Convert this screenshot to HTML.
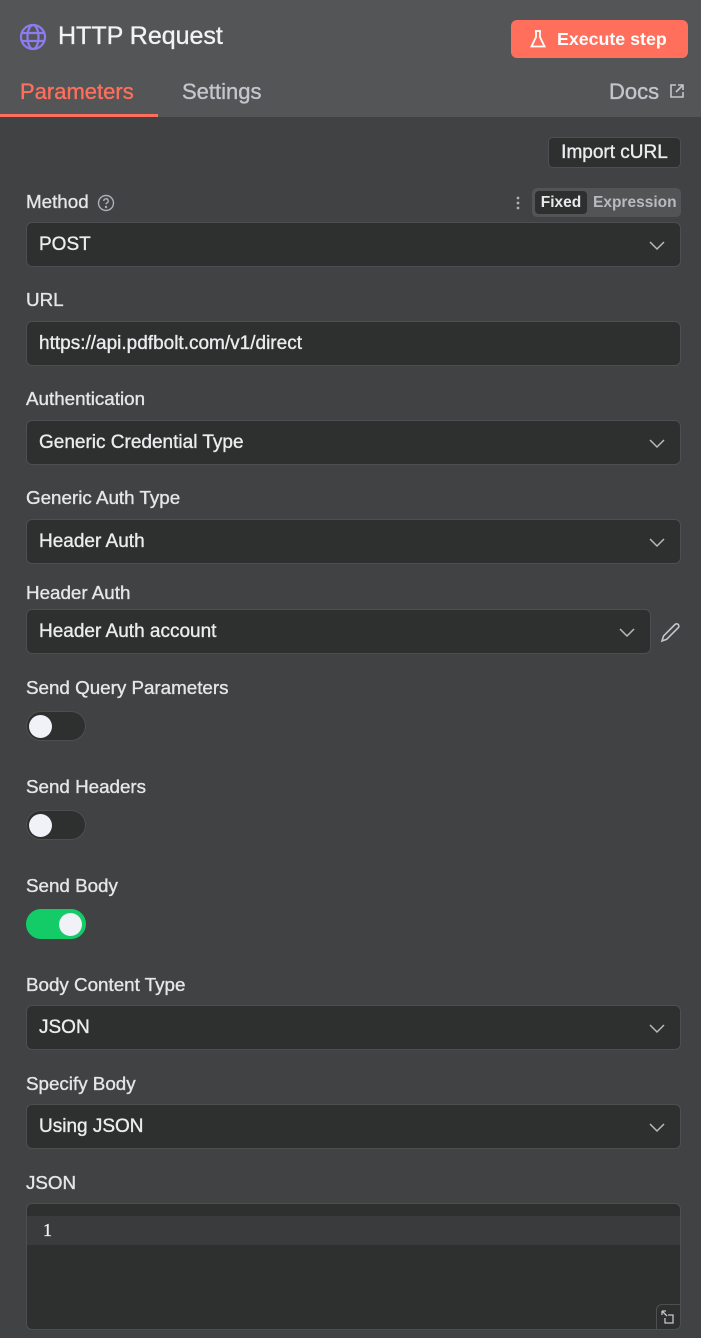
<!DOCTYPE html>
<html><head><meta charset="utf-8"><style>
*{box-sizing:border-box;margin:0;padding:0}
body{width:701px;height:1338px;background:#414244;font-family:"Liberation Sans",sans-serif;color:#e9e9ec;position:relative;overflow:hidden;-webkit-text-stroke:0.35px currentColor}
.hdr{position:absolute;left:0;top:0;width:701px;height:117px;background:#545557}
.abs{position:absolute}
.lbl{position:absolute;left:26px;font-size:18.8px;color:#e6e6e8;line-height:20px}
.inp{position:absolute;left:26px;width:655px;height:45px;background:#2e2f2f;border:1px solid #4e4f51;border-radius:6px;font-size:19px;color:#ececee;padding-left:12px;line-height:43px}
.chev{position:absolute;right:14px;top:16px}
.tog{position:absolute;left:26px;width:60px;height:30px;border-radius:15px;background:#2e2f2f;border:1px solid #4e4f51}
.tog i{position:absolute;top:3px;left:2px;width:23px;height:23px;border-radius:50%;background:#f1f2f8}
.tog.on{background:#13cc68;border-color:#13cc68}
.tog.on i{left:32px}
svg{-webkit-text-stroke:0}
</style></head><body>
<div class="hdr"></div>
<svg class="abs" style="left:19px;top:23px" width="28" height="28" viewBox="0 0 28 28" fill="none" stroke="#8a7df0" stroke-width="2.2"><circle cx="14" cy="14" r="12"/><ellipse cx="14" cy="14" rx="5.5" ry="12"/><path d="M2.5 10h23M2.5 18h23"/></svg>
<div class="abs" style="left:58px;top:21px;font-size:25px;color:#f3f3f5;line-height:30px">HTTP Request</div>
<div class="abs" style="left:511px;top:20px;width:177px;height:38px;background:#ff6f5c;border-radius:6px;color:#fff;font-size:17.8px;font-weight:bold;line-height:38px;padding-left:46px;-webkit-text-stroke:0">Execute step</div>
<svg class="abs" style="left:529px;top:29px" width="18" height="20" viewBox="0 0 18 20" fill="none" stroke="#fff" stroke-width="1.8"><path d="M6 2h6M7 2v6L2.5 17.5h13L11 8V2"/></svg>
<div class="abs" style="left:20px;top:80px;font-size:22px;color:#ff6f5c;line-height:24px">Parameters</div>
<div class="abs" style="left:0;top:114px;width:158px;height:3px;background:#ff6f5c"></div>
<div class="abs" style="left:182px;top:80px;font-size:22px;color:#c4c6cc;line-height:24px">Settings</div>
<div class="abs" style="left:609px;top:80px;font-size:22px;color:#c4c6cc;line-height:24px">Docs</div>
<svg class="abs" style="left:669px;top:83px" width="16" height="16" viewBox="0 0 16 16" fill="none" stroke="#c4c6cc" stroke-width="1.6"><path d="M7 2H2v12h12V9M9 2h5v5M14 2L7 9"/></svg>
<div class="abs" style="left:548px;top:137px;width:133px;height:31px;background:#2e2f2f;border:1px solid #4e4f51;border-radius:5px;font-size:19px;line-height:29px;text-align:center;color:#ececee">Import cURL</div>
<div class="lbl" style="top:192px">Method</div>
<svg class="abs" style="left:97px;top:194px" width="18" height="18" viewBox="0 0 18 18" fill="none" stroke="#aeb0b6" stroke-width="1.4"><circle cx="9" cy="9" r="7.5"/><path d="M6.8 7a2.2 2.2 0 1 1 3 2c-.6.3-.8.7-.8 1.3"/><circle cx="9" cy="13" r=".5" fill="#aeb0b6"/></svg>
<svg class="abs" style="left:514px;top:195px" width="8" height="16"><circle cx="4" cy="3" r="1.4" fill="#aeb0b6"/><circle cx="4" cy="8" r="1.4" fill="#aeb0b6"/><circle cx="4" cy="13" r="1.4" fill="#aeb0b6"/></svg>
<div class="abs" style="left:532px;top:188px;width:149px;height:29px;background:#535456;border-radius:5px"></div>
<div class="abs" style="left:535px;top:191px;width:52px;height:23px;background:#2e2f2f;border-radius:4px;font-size:15.5px;font-weight:bold;line-height:23px;text-align:center;-webkit-text-stroke:0">Fixed</div>
<div class="abs" style="left:593px;top:191px;font-size:15.5px;font-weight:bold;color:#b8bac0;line-height:23px;-webkit-text-stroke:0">Expression</div>
<div class="inp" style="top:222px">POST<svg class="chev" width="18" height="12" viewBox="0 0 18 12" fill="none" stroke="#b8bac0" stroke-width="1.5"><path d="M2 3l7 7 7-7"/></svg></div>
<div class="lbl" style="top:290px">URL</div>
<div class="inp" style="top:321px">https://api.pdfbolt.com/v1/direct</div>
<div class="lbl" style="top:389px">Authentication</div>
<div class="inp" style="top:420px">Generic Credential Type<svg class="chev" width="18" height="12" viewBox="0 0 18 12" fill="none" stroke="#b8bac0" stroke-width="1.5"><path d="M2 3l7 7 7-7"/></svg></div>
<div class="lbl" style="top:488px">Generic Auth Type</div>
<div class="inp" style="top:519px">Header Auth<svg class="chev" width="18" height="12" viewBox="0 0 18 12" fill="none" stroke="#b8bac0" stroke-width="1.5"><path d="M2 3l7 7 7-7"/></svg></div>
<div class="lbl" style="top:583px">Header Auth</div>
<div class="inp" style="top:609px;width:625px">Header Auth account<svg class="chev" width="18" height="12" viewBox="0 0 18 12" fill="none" stroke="#b8bac0" stroke-width="1.5"><path d="M2 3l7 7 7-7"/></svg></div>
<svg class="abs" style="left:659px;top:620px" width="24" height="24" viewBox="0 0 24 24" fill="none" stroke="#c4c6cc" stroke-width="1.6"><path d="M3 21l1.5-5L16 4.5a2.2 2.2 0 0 1 3.2 3.2L7.7 19.3z"/></svg>
<div class="lbl" style="top:678px">Send Query Parameters</div>
<div class="tog" style="top:711px"><i></i></div>
<div class="lbl" style="top:777px">Send Headers</div>
<div class="tog" style="top:810px"><i></i></div>
<div class="lbl" style="top:876px">Send Body</div>
<div class="tog on" style="top:909px"><i></i></div>
<div class="lbl" style="top:975px">Body Content Type</div>
<div class="inp" style="top:1005px">JSON<svg class="chev" width="18" height="12" viewBox="0 0 18 12" fill="none" stroke="#b8bac0" stroke-width="1.5"><path d="M2 3l7 7 7-7"/></svg></div>
<div class="lbl" style="top:1074px">Specify Body</div>
<div class="inp" style="top:1104px">Using JSON<svg class="chev" width="18" height="12" viewBox="0 0 18 12" fill="none" stroke="#b8bac0" stroke-width="1.5"><path d="M2 3l7 7 7-7"/></svg></div>
<div class="lbl" style="top:1173px">JSON</div>
<div class="abs" style="left:26px;top:1203px;width:655px;height:127px;background:#2e2f2f;border:1px solid #4e4f51;border-radius:6px;overflow:hidden">
<div class="abs" style="left:0;top:12px;width:655px;height:29px;background:#3a3b3d"></div>
<div class="abs" style="left:16px;top:14px;font-family:'Liberation Serif',serif;font-size:18px;line-height:24px;color:#f0f0f0">1</div>
<div class="abs" style="left:629px;top:100px;width:26px;height:27px;border-left:1px solid #4e4f51;border-top:1px solid #4e4f51;border-radius:6px 0 0 0"></div>
<svg class="abs" style="left:633px;top:105px" width="16" height="16" viewBox="0 0 16 16" fill="none" stroke="#c4c6cc" stroke-width="1.3"><path d="M2 2l5 5M2 2h4M2 2v4M5 9v5h8V6H8"/></svg>
</div>
</body></html>
